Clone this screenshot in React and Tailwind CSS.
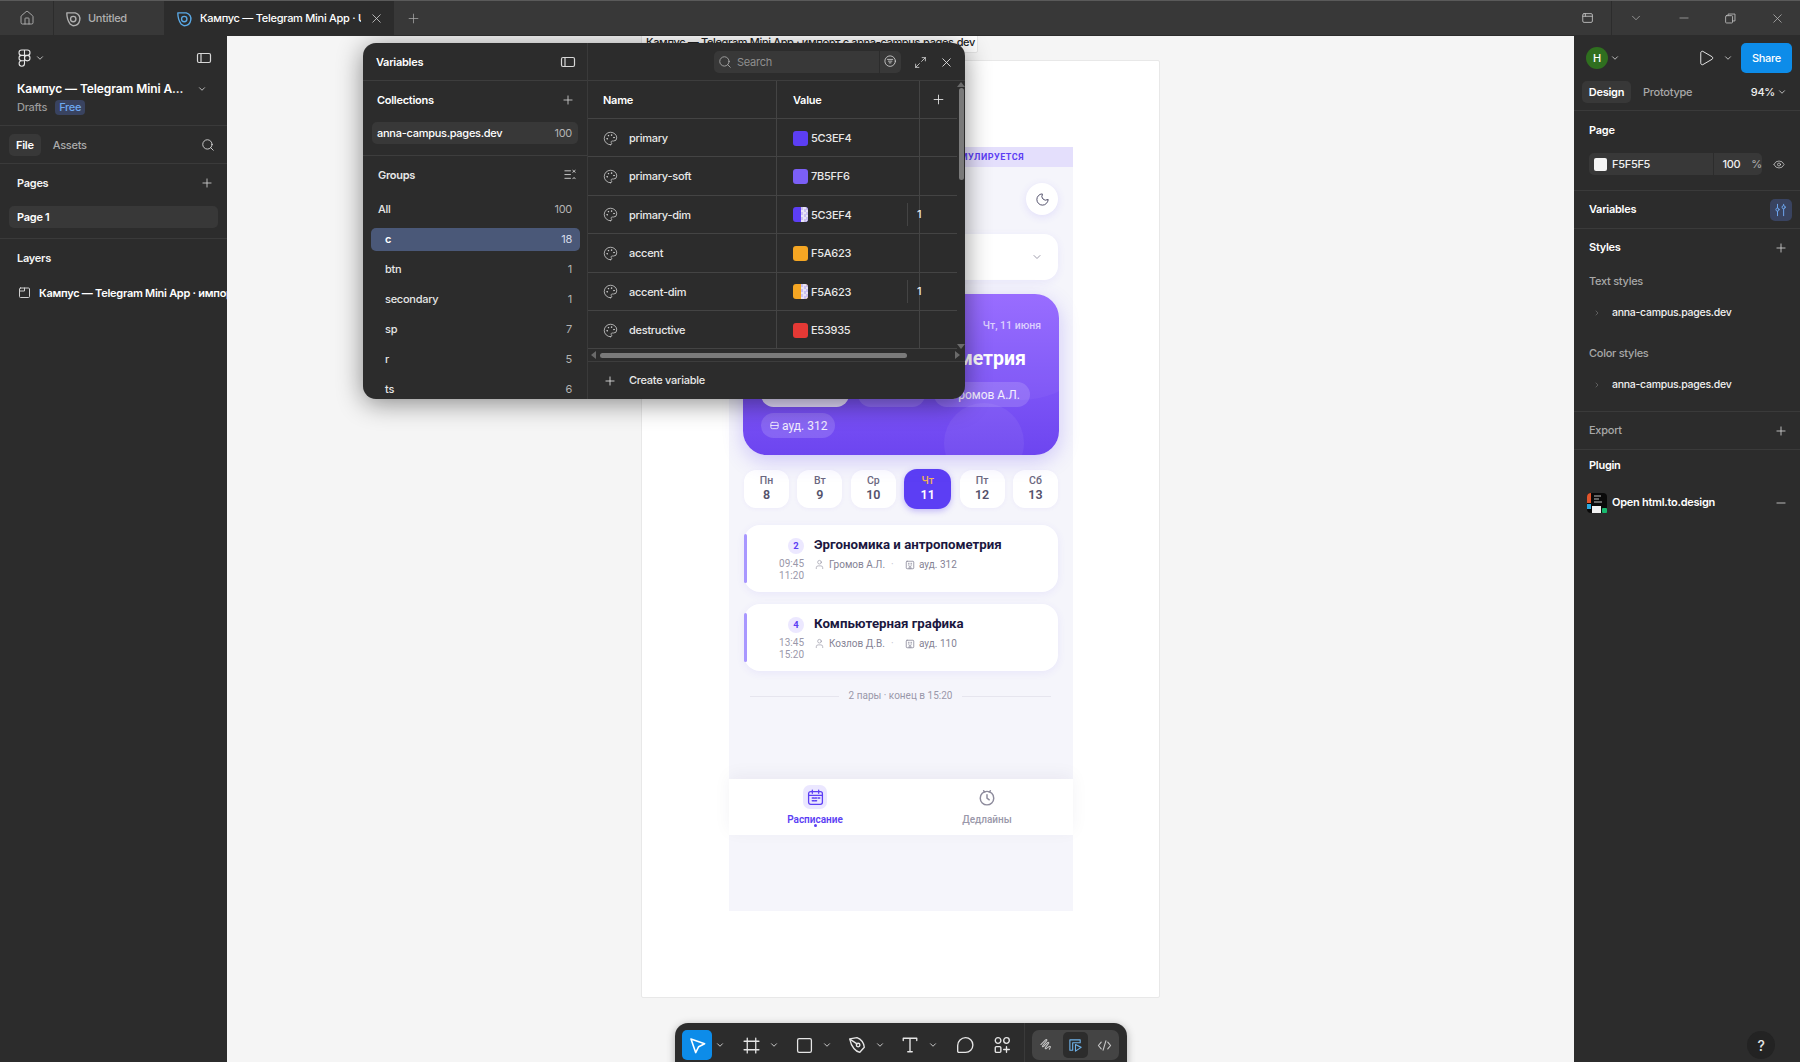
import React from "react";
import { House, X, Plus, Search, ChevronDown, ChevronRight, Eye, Palette, Moon, Minus, Maximize2, User, Play } from "lucide-react";

const S = ({ size = 16, children, className = "", sw = 1.2, vb = 16 }) => (
  <svg width={size} height={size} viewBox={`0 0 ${vb} ${vb}`} fill="none" stroke="currentColor" strokeWidth={sw} strokeLinecap="round" strokeLinejoin="round" className={className}>{children}</svg>
);
const Chev = ({ className = "" }) => <ChevronDown size={10} strokeWidth={2} className={className} />;
const PanelIcon = ({ className = "" }) => <S size={16} className={className}><rect x="1.5" y="3.5" width="13" height="9" rx="1.5" /><path d="M5 3.5v9" /></S>;
const FileIcon = ({ className = "" }) => (
  <S size={18} className={className}><path d="M2.5 2.5 L10 2.5 C13 3.5 14.5 6 14 9 C13.5 12 11 14 8 14 L5.5 12.5 C3.5 10 2.5 6 2.5 2.5Z" /><circle cx="8.2" cy="8" r="2.4" /></S>
);
const FigmaIcon = () => (
  <svg width="13" height="18" viewBox="0 0 13 18" fill="none" stroke="#e6e6e6" strokeWidth="1.1">
    <path d="M6.5 1H3.7a2.7 2.7 0 0 0 0 5.4h2.8zM6.5 1h2.8a2.7 2.7 0 0 1 0 5.4H6.5zM6.5 6.4H3.7a2.7 2.7 0 0 0 0 5.4h2.8zM12 9.1a2.75 2.75 0 1 1-5.5 0 2.75 2.75 0 0 1 5.5 0zM6.5 11.8H3.7a2.7 2.7 0 1 0 2.8 2.7z" />
  </svg>
);

const groups = [["All", "100", false], ["c", "18", true], ["btn", "1"], ["secondary", "1"], ["sp", "7"], ["r", "5"], ["ts", "6"]];
const vars = [
  ["primary", "#5C3EF4", "5C3EF4"],
  ["primary-soft", "#7B5FF6", "7B5FF6"],
  ["primary-dim", "#5C3EF4", "5C3EF4", true],
  ["accent", "#F5A623", "F5A623"],
  ["accent-dim", "#F5A623", "F5A623", true],
  ["destructive", "#E53935", "E53935"],
];

function Swatch({ color, dim }) {
  return (
    <span className="relative w-[15px] h-[15px] rounded-[3px] overflow-hidden flex shrink-0" style={{ background: color }}>
      {dim && (
        <span className="absolute right-0 top-0 bottom-0 w-[7px] bg-[repeating-conic-gradient(#e8e4f4_0_25%,#c9bff2_0_50%)] bg-[length:5px_5px]" />
      )}
    </span>
  );
}

function VariablesModal() {
  return (
    <div className="absolute left-[136px] top-[7px] w-[602px] h-[356px] rounded-[13px] bg-[#2c2c2c] shadow-[0_4px_26px_rgba(0,0,0,0.45)] flex overflow-hidden text-[11px] tracking-[-0.27px] font-medium text-[#f0f0f0]">
      <div className="w-[225px] shrink-0 border-r border-[#3a3a3a] flex flex-col">
        <div className="h-[38px] shrink-0 border-b border-[#3d3d3d] flex items-center justify-between pl-[13px] pr-[11px] pt-[1px] font-semibold text-white">
          <span>Variables</span>
          <PanelIcon className="text-[#d8d8d8]" />
        </div>
        <div className="h-[75px] shrink-0 border-b border-[#3d3d3d] px-[9px]">
          <div className="h-[37px] flex items-center justify-between pl-[5px] pr-[3px] pt-[1px] font-semibold text-white">
            <span>Collections</span>
            <Plus size={14} strokeWidth={1.4} className="text-[#d8d8d8]" />
          </div>
          <div className="h-[22px] mt-[4px] rounded-[5px] bg-[#383838] flex items-center justify-between pl-[5px] font-medium text-white">
            <span>anna-campus.pages.dev</span>
            <span className="font-normal text-[#b3b3b3] pr-[6px]">100</span>
          </div>
        </div>
        <div className="flex items-center justify-between h-[38px] shrink-0 pl-[15px] pr-[9px] font-semibold text-[#e8e8e8]">
          <span>Groups</span>
          <S size={15} className="text-[#cfcfcf]" sw={1}><path d="M2 3h6M2 7h6M2 11h6M10.5 2.5l2.5 2M13 2.5l-2.5 2M10.5 11.5l1.3-1.5 1.2 1.5" /></S>
        </div>
        <div className="flex flex-col pl-[8px] pr-[7px] pt-[4px]">
          {groups.map(([n, c, sel], i) => (
            <div key={n} className={`h-[23px] mb-[7px] shrink-0 rounded-[5px] flex items-center justify-between pr-[8px] ${i === 0 ? "pl-[7px]" : "pl-[14px]"} ${sel ? "bg-[#4a5878] font-semibold text-white" : "text-[#e6e6e6]"}`}>
              <span>{n}</span>
              <span className={`font-normal ${sel ? "text-[#d5dbe8]" : "text-[#b3b3b3]"}`}>{c}</span>
            </div>
          ))}
        </div>
      </div>
      <div className="flex-1 min-w-0 flex flex-col relative">
        <div className="h-[38px] shrink-0 border-b border-[#3d3d3d] flex items-center justify-end pr-[11px] pt-[1px]">
          <div className="w-[187px] h-[22px] rounded-[5px] bg-[#383838] flex items-center mr-[13px]">
            <Search size={14} className="ml-[4px] text-[#b3b3b3]" strokeWidth={1.4} />
            <span className="ml-[5px] flex-1 text-[#8f8f8f] font-normal">Search</span>
            <span className="w-[22px] h-[22px] border-l border-[#2c2c2c] flex items-center justify-center text-[#cfcfcf]">
              <S size={14} sw={1}><circle cx="7" cy="7" r="6" /><path d="M4 5h6M5 7h4M6 9h2" /></S>
            </span>
          </div>
          <Maximize2 size={13} strokeWidth={1.4} className="text-[#e6e6e6] mr-[12px]" />
          <X size={15} strokeWidth={1.4} className="text-[#e6e6e6]" />
        </div>
        <div className="flex-1 min-h-0 flex flex-col pr-[8px]">
          <div className="grid grid-cols-[189px_143px_37px] h-[38px] shrink-0 border-b border-[#444] font-semibold text-white">
            <div className="border-r border-[#444] flex items-center pl-[15px] pt-[1px]">Name</div>
            <div className="border-r border-[#444] flex items-center pl-[16px] pt-[1px]">Value</div>
            <div className="flex items-center justify-center"><Plus size={15} strokeWidth={1.4} className="text-[#e6e6e6]" /></div>
          </div>
          {vars.map(([n, col, hex, dim]) => (
            <div key={n} className="grid grid-cols-[189px_143px_37px] h-[38.4px] shrink-0 border-b border-[#444] text-[#e8e8e8]">
              <div className="border-r border-[#444] flex items-center pl-[15px] gap-[11px] pt-[1px]">
                <Palette size={15} strokeWidth={1.2} className="text-[#d8d8d8]" />
                <span>{n}</span>
              </div>
              <div className="border-r border-[#444] flex items-center pl-[16px] relative pt-[1px]">
                <Swatch color={col} dim={dim} />
                <span className="ml-[3px]">{hex}</span>
                {dim && <span className="absolute left-[130px] top-[7px] bottom-[7px] border-l border-[#444] pl-[9px] flex items-center">1</span>}
              </div>
              <div />
            </div>
          ))}
          <div className="h-[13px] shrink-0 border-b border-[#3d3d3d] flex items-center text-[#808080] mr-[-8px] pr-[8px]">
            <span className="w-0 h-0 ml-[3px] border-y-[4px] border-y-transparent border-r-[5px] border-r-[#6a6a6a]" />
            <span className="ml-[4px] w-[307px] h-[5px] rounded-full bg-[#7a7a7a]" />
            <span className="ml-auto w-0 h-0 mr-[-3px] border-y-[4px] border-y-transparent border-l-[5px] border-l-[#6a6a6a]" />
          </div>
          <div className="flex-1 flex items-center pl-[15px] gap-[12px] text-[#e8e8e8]">
            <Plus size={14} strokeWidth={1.4} />
            <span>Create variable</span>
          </div>
        </div>
        <div className="absolute right-[1px] top-[39px] w-[6px] flex flex-col items-center">
          <span className="w-0 h-0 border-x-[4px] border-x-transparent border-b-[5px] border-b-[#6a6a6a]" />
          <span className="mt-[1px] w-[5px] h-[92px] rounded-full bg-[#7a7a7a]" />
        </div>
        <span className="absolute right-[0px] top-[301px] w-0 h-0 border-x-[4px] border-x-transparent border-t-[5px] border-t-[#6a6a6a]" />
      </div>
    </div>
  );
}

const days = [["Пн", "8"], ["Вт", "9"], ["Ср", "10"], ["Чт", "11", true], ["Пт", "12"], ["Сб", "13"]];

function Building() {
  return <S size={10} vb={12} sw={1} className="text-[#8d8b9c]"><rect x="1.5" y="1.5" width="9" height="9" rx="1" /><path d="M4 4h1M7 4h1M4 6h1M7 6h1M5 10.5V8h2v2.5" /></S>;
}

function LessonCard({ num, from, to, title, teacher, room }) {
  return (
    <div className="h-[67px] bg-white rounded-[16px] shadow-[0_2px_8px_rgba(92,62,244,0.08)] flex relative">
      <span className="absolute left-0 top-[9px] bottom-[9px] w-[2.5px] rounded-full bg-[#a897ff]" />
      <div className="w-[60px] flex flex-col items-end pt-[13px] shrink-0">
        <span className="w-[16px] h-[16px] rounded-full bg-[#ece8ff] text-[#5c3ef4] text-[9.5px] font-bold flex items-center justify-center">{num}</span>
        <span className="mt-[4px] text-[10px] leading-[12px] text-[#9a98aa]">{from}</span>
        <span className="text-[10px] leading-[12px] text-[#9a98aa]">{to}</span>
      </div>
      <div className="pl-[10px] pt-[10px]">
        <div className="text-[13.25px] leading-[20px] font-bold text-[#1b1740]">{title}</div>
        <div className="mt-[2px] flex items-center text-[10px] text-[#858395]">
          <User size={11} strokeWidth={1.3} className="text-[#8d8b9c]" />
          <span className="ml-[4px] w-[62px]">{teacher}</span>
          <span className="w-[14px] text-[#c4c3ce]">·</span>
          <Building />
          <span className="ml-[4px]">{room}</span>
        </div>
      </div>
    </div>
  );
}

function Phone() {
  return (
    <div className="w-[344px] h-[764px] bg-[#f5f5fb] flex flex-col font-['Roboto',sans-serif]">
      <div className="h-[20px] bg-[#e4dffc] flex items-center justify-end pr-[49px] pt-[2px] text-[9px] font-bold tracking-[0.5px] text-[#5c3ef4]">СИМУЛИРУЕТСЯ</div>
      <div className="pl-[14px] pr-[15px] flex flex-col">
        <div className="pt-[16px] flex justify-end">
          <span className="w-[32px] h-[32px] rounded-full bg-white shadow-[0_2px_8px_rgba(92,62,244,0.12)] flex items-center justify-center text-[#3d3a58]"><Moon size={15} strokeWidth={1.4} /></span>
        </div>
        <div className="mt-[19px] h-[46px] bg-white rounded-[14px] shadow-[0_2px_8px_rgba(92,62,244,0.08)] flex items-center justify-end pr-[15px] text-[#858395]"><ChevronDown size={12} strokeWidth={1.6} /></div>
        <div className="mt-[14px] h-[161px] mr-[-1px] rounded-[24px] bg-gradient-to-b from-[#9567ff] to-[#6d45f0] shadow-[0_6px_20px_rgba(92,62,244,0.25)] relative overflow-hidden px-[18px] text-white">
          <span className="absolute right-[-50px] top-[-70px] w-[290px] h-[176px] rounded-full bg-white/[0.04]" />
          <span className="absolute left-[201px] top-[109px] w-[80px] h-[80px] rounded-full bg-white/[0.06]" />
          <div className="relative text-right text-[10.5px] font-medium text-white/70 pt-[26px] leading-[12px]">Чт, 11 июня</div>
          <div className="relative mt-[15px] flex justify-end pr-[15px] text-[19.5px] leading-[24px] font-bold whitespace-nowrap">Эргономика и антропометрия</div>
          <div className="relative mt-[11px] flex flex-wrap gap-x-[9px] gap-y-[6px] text-[12px] text-white/90">
            <span className="w-[88px] h-[25px] rounded-full bg-white/80" />
            <span className="w-[67px] h-[25px] rounded-full bg-white/15" />
            <span className="w-[96px] h-[25px] rounded-full bg-white/15 flex items-center justify-end pr-[10px]">Громов А.Л.</span>
            <span className="h-[25px] w-[74px] rounded-full bg-white/15 flex items-center pl-[9px] gap-[3px]">
              <S size={9} vb={10} sw={1}><rect x="1" y="1.5" width="8" height="7" rx="1.5" /><path d="M1 5h8" /></S>
              ауд. 312
            </span>
          </div>
        </div>
        <div className="mt-[15px] h-[38px] pl-[1px] flex justify-between items-center">
          {days.map(([d, n, a]) => (
            <div key={d} className={a ? "w-[47px] h-[40px] rounded-[13px] bg-[#5c3ef4] flex flex-col items-center justify-center shadow-[0_2px_6px_rgba(92,62,244,0.35)]" : "w-[45px] h-[38px] rounded-[12px] bg-white flex flex-col items-center justify-center shadow-[0_1px_4px_rgba(92,62,244,0.05)]"}>
              <span className={`text-[10.5px] leading-[13px] mt-[-2px] font-medium ${a ? "text-[#f5b455]" : "text-[#6b6880]"}`}>{d}</span>
              <span className={`text-[12.5px] leading-[15px] font-semibold ${a ? "text-white" : "text-[#55526b]"}`}>{n}</span>
            </div>
          ))}
        </div>
        <div className="mt-[17px] flex flex-col gap-[12px] pl-[1px]">
          <LessonCard num="2" from="09:45" to="11:20" title="Эргономика и антропометрия" teacher="Громов А.Л." room="ауд. 312" />
          <LessonCard num="4" from="13:45" to="15:20" title="Компьютерная графика" teacher="Козлов Д.В." room="ауд. 110" />
        </div>
        <div className="mt-[18px] flex items-center gap-[10px] px-[7px] text-[10px] leading-[14px] text-[#9a98aa]">
          <span className="flex-1 h-px bg-[#e6e5ee]" />
          <span>2 пары · конец в 15:20</span>
          <span className="flex-1 h-px bg-[#e6e5ee]" />
        </div>
      </div>
      <div className="mt-[76px] h-[56px] bg-white shadow-[0_-4px_16px_rgba(30,20,80,0.05)] flex">
        <div className="flex-1 flex flex-col items-center relative pt-[6px]">
          <span className="w-[24px] h-[24px] rounded-[7px] bg-[#ebe7ff] flex items-center justify-center text-[#5c3ef4]">
            <S size={17} sw={1.2}><rect x="1.5" y="2.5" width="13" height="12" rx="2" /><path d="M1.5 6h13M5 1v3M11 1v3" /><path d="M5 8.5h1.5M7.5 8.5H9M10.5 8.5H12M5 11h1.5M7.5 11H9" strokeWidth="1.4" /></S>
          </span>
          <span className="mt-[4px] text-[10px] leading-[14px] font-semibold text-[#5c3ef4]">Расписание</span>
          <span className="absolute top-[45px] w-[3px] h-[3px] rounded-full bg-[#5c3ef4]" />
        </div>
        <div className="flex-1 flex flex-col items-center pt-[6px]">
          <span className="w-[24px] h-[24px] flex items-center justify-center text-[#8d8b9c]">
            <S size={18} sw={1.3}><circle cx="8" cy="9" r="6" /><path d="M8 6v3l2 1.5M5 2.5 6 3.5M11 2.5 10 3.5" /></S>
          </span>
          <span className="mt-[4px] text-[10px] leading-[14px] font-medium text-[#9a98aa]">Дедлайны</span>
        </div>
      </div>
    </div>
  );
}

const ToolChevron = () => <span className="w-[16px] flex justify-center text-[#e6e6e6]"><Chev /></span>;
const ToolBtn = ({ children, className = "text-[#e6e6e6]" }) => <span className={`w-[30px] h-[30px] flex items-center justify-center rounded-[5px] ${className}`}>{children}</span>;

function Toolbar() {
  return (
    <div className="absolute left-[448px] top-[987px] w-[452px] h-[48px] rounded-t-[13px] bg-[#2c2c2c] shadow-[0_2px_8px_rgba(0,0,0,0.3)] flex items-start pt-[7px] pl-[7px]">
      <div className="flex items-center w-[54px]">
        <ToolBtn className="bg-[#0d8ce9] text-white"><S size={19} sw={1.3}><path d="M2.5 2.5 14 6.5 9 9 6.5 14Z" /></S></ToolBtn>
        <ToolChevron />
      </div>
      <div className="flex items-center w-[53px]">
        <ToolBtn><S size={17} sw={1.2}><path d="M4 1v14M12 1v14M1 4h14M1 12h14" /></S></ToolBtn>
        <ToolChevron />
      </div>
      <div className="flex items-center w-[53px]">
        <ToolBtn><S size={17} sw={1.2}><rect x="1.5" y="1.5" width="13" height="13" rx="1.5" /></S></ToolBtn>
        <ToolChevron />
      </div>
      <div className="flex items-center w-[53px]">
        <ToolBtn><S size={18} sw={1.2}><path d="M1.5 2.5 8 1.5 C12 3 14 6 14.5 10 L10.5 14.5 C7 14 3 10 1.5 2.5Z" /><circle cx="9" cy="8" r="1.6" /><path d="M2 3l6 4" /></S></ToolBtn>
        <ToolChevron />
      </div>
      <div className="flex items-center w-[55px]">
        <ToolBtn><S size={18} sw={1.2}><path d="M2 4V2h12v2M8 2v12M6 14h4" /></S></ToolBtn>
        <ToolChevron />
      </div>
      <ToolBtn><S size={18} sw={1.2}><path d="M8.5 1.5a6.5 6.5 0 0 1 0 13H2.5a1 1 0 0 1-1-1V8.5a7 7 0 0 1 7-7Z" /></S></ToolBtn>
      <span className="ml-[7px]"><ToolBtn><S size={18} sw={1.2}><circle cx="4.5" cy="4" r="2.5" /><circle cx="12" cy="4" r="2.5" /><rect x="2" y="9.5" width="5" height="5" rx="1" /><path d="M12 9.5v5M9.5 12h5" /></S></ToolBtn></span>
      <span className="ml-[7px] h-[48px] mt-[-7px] border-l border-[#3a3a3a]" />
      <div className="ml-[7px] w-[87px] h-[30px] rounded-[7px] bg-[#444] flex items-center px-[2px]">
        <span className="w-[26px] h-[26px] flex items-center justify-center text-[#c8c8c8]"><S size={15} sw={1.1}><path d="M2 7 7 2c1-1 2 0 1 1L4 8c-1 1 0 2 1 1l4-4c1-1 2 0 1 1l-3 4c-1 1 0 2 1 1l3-2c1-.5 1.5.5 1 1l-1 2" /></S></span>
        <span className="ml-[3px] w-[26px] h-[26px] rounded-[5px] bg-[#2c2c2c] flex items-center justify-center text-[#6db1e8]"><S size={15} sw={1.2}><path d="M2 2h11v3H5v8H2Z" /><path d="M8 7l6 3-6 4Z" /></S></span>
        <span className="ml-[3px] w-[26px] h-[26px] flex items-center justify-center text-[#c8c8c8]"><S size={15} sw={1.2}><path d="M4.5 4.5 1.5 8l3 3.5M11.5 4.5l3 3.5-3 3.5M9.5 3l-3 10" /></S></span>
      </div>
    </div>
  );
}

function LeftPanel() {
  return (
    <aside className="w-[227px] shrink-0 bg-[#2c2c2c] flex flex-col text-[11px] tracking-[-0.27px] font-medium text-[#f0f0f0]">
      <div className="h-[90px] shrink-0 border-b border-[#3a3a3a] px-[17px] relative">
        <div className="flex items-center justify-between h-[44px]">
          <span className="flex items-center gap-[4px] ml-[1px]"><FigmaIcon /><Chev className="text-[#d8d8d8]" /></span>
          <PanelIcon className="mr-[-2px] text-[#d8d8d8]" />
        </div>
        <div className="flex items-center justify-between whitespace-nowrap">
          <span className="text-[12px] tracking-[-0.1px] leading-[18px] font-semibold text-white">Кампус — Telegram Mini A...</span>
          <Chev className="text-[#d8d8d8] mr-[3px]" />
        </div>
        <div className="flex items-center gap-[8px] pt-[1px]">
          <span className="text-[#9a9a9a]">Drafts</span>
          <span className="h-[15px] px-[4px] rounded-[4px] bg-[#394360] text-[#6ea8f0] flex items-center">Free</span>
        </div>
      </div>
      <div className="h-[38px] shrink-0 border-b border-[#3a3a3a] flex items-center pl-[9px] pr-[12px] pt-[1px]">
        <span className="h-[22px] px-[7px] rounded-[5px] bg-[#383838] font-semibold text-white flex items-center">File</span>
        <span className="ml-[4px] px-[8px] text-[#ababab]">Assets</span>
        <Search size={14} strokeWidth={1.4} className="ml-auto text-[#e6e6e6]" />
      </div>
      <div className="h-[75px] shrink-0 border-b border-[#3a3a3a] px-[9px]">
        <div className="h-[37px] flex items-center justify-between pl-[8px] pr-[4px] pt-[1px] font-semibold text-[#f5f5f5]"><span>Pages</span><Plus size={14} strokeWidth={1.4} className="text-[#d8d8d8]" /></div>
        <div className="mt-[5px] h-[22px] rounded-[5px] bg-[#383838] flex items-center pl-[8px] font-semibold text-white">Page 1</div>
      </div>
      <div className="px-[17px] pt-[11px] font-semibold text-[#f5f5f5]">Layers</div>
      <div className="mt-[18px] pl-[18px] flex items-center gap-[8px] overflow-hidden whitespace-nowrap">
        <S size={13} className="shrink-0 text-[#cfcfcf]" sw={1} vb={13}><rect x="1.5" y="2" width="10" height="9.5" rx="1" /><path d="M1.5 5h5V2" /></S>
        <span className="font-semibold text-white">Кампус — Telegram Mini App · импорт с anna-campus.pages.dev</span>
      </div>
    </aside>
  );
}

function RightPanel() {
  const Sec = ({ children, cls = "" }) => <div className={`border-b border-[#3a3a3a] shrink-0 ${cls}`}>{children}</div>;
  return (
    <aside className="w-[226px] shrink-0 bg-[#2c2c2c] flex flex-col text-[11px] tracking-[-0.27px] font-medium text-[#f0f0f0] relative">
      <Sec cls="h-[75px] px-[8px]">
        <div className="h-[44px] flex items-center">
          <span className="ml-[4px] w-[22px] h-[22px] rounded-full bg-[#2f6f1f] text-white text-[11px] flex items-center justify-center">H</span>
          <Chev className="ml-[2px] text-[#d8d8d8]" />
          <Play size={18} strokeWidth={1.3} className="ml-[77px] text-[#e6e6e6]" />
          <Chev className="ml-[8px] text-[#d8d8d8]" />
          <span className="ml-[8px] w-[51px] h-[30px] rounded-[5px] bg-[#0d8ce9] text-white flex items-center justify-center">Share</span>
        </div>
        <div className="flex items-center mt-[1px] h-[22px]">
          <span className="w-[49px] h-[22px] rounded-[5px] bg-[#383838] font-semibold text-white flex items-center justify-center">Design</span>
          <span className="ml-[12px] text-[#a8a8a8]">Prototype</span>
          <span className="ml-auto flex items-center gap-[2px] mr-[5px]">94% <Chev className="text-[#d8d8d8]" /></span>
        </div>
      </Sec>
      <Sec cls="h-[80px] px-[15px]">
        <div className="h-[38px] flex items-center font-semibold text-white">Page</div>
        <div className="flex items-center mt-[4px]">
          <div className="w-[173px] h-[22px] rounded-[5px] bg-[#383838] flex items-center text-[#f0f0f0]">
            <span className="ml-[5px] w-[13px] h-[13px] rounded-[2px] bg-[#f5f5f5]" />
            <span className="ml-[5px] w-[102px]">F5F5F5</span>
            <span className="h-[22px] border-l border-[#2c2c2c] pl-[8px] flex items-center">100</span>
            <span className="ml-[11px] text-[#a8a8a8]">%</span>
          </div>
          <Eye size={17} strokeWidth={1.3} className="ml-[11px] text-[#e6e6e6]" />
        </div>
      </Sec>
      <Sec cls="h-[38px] px-[15px] flex items-center justify-between pr-[8px]">
        <span className="font-semibold text-white">Variables</span>
        <span className="w-[22px] h-[22px] rounded-[5px] bg-[#394360] flex items-center justify-center text-[#6ea8f0]">
          <S size={14} sw={1.1}><path d="M4 1.5v4M4 9.5v5M11 1.5v1M11 7v7.5" /><circle cx="4" cy="7.5" r="1.8" /><circle cx="11" cy="4.8" r="1.8" /></S>
        </span>
      </Sec>
      <Sec cls="h-[183px] pl-[15px] pr-[12px]">
        <div className="h-[37px] flex items-center justify-between font-semibold text-white"><span>Styles</span><Plus size={14} strokeWidth={1.4} className="text-[#d8d8d8]" /></div>
        <div className="h-[15px] mt-[4px] flex items-center text-[#a8a8a8] pt-[8px]">Text styles</div>
        <div className="mt-[20px] flex items-center whitespace-nowrap text-[10.5px]"><ChevronRight size={8} strokeWidth={1.6} className="ml-[4px] text-[#8a8a8a]" /><span className="ml-[11px]">anna-campus.pages.dev</span></div>
        <div className="mt-[24px] text-[#a8a8a8]">Color styles</div>
        <div className="mt-[16px] flex items-center whitespace-nowrap text-[10.5px]"><ChevronRight size={8} strokeWidth={1.6} className="ml-[4px] text-[#8a8a8a]" /><span className="ml-[11px]">anna-campus.pages.dev</span></div>
      </Sec>
      <Sec cls="h-[38px] pl-[15px] pr-[12px] flex items-center justify-between text-[#a8a8a8]"><span>Export</span><Plus size={14} strokeWidth={1.4} className="text-[#d8d8d8]" /></Sec>
      <div className="pl-[15px] pr-[12px] pt-[7px] font-semibold text-white">Plugin</div>
      <div className="mt-[19px] pl-[13px] pr-[12px] flex items-center">
        <svg width="20" height="20" viewBox="0 0 20 20" className="shrink-0">
          <rect width="20" height="20" rx="4" fill="#0a0a0a" />
          <path d="M0 4a4 4 0 0 1 4-4v10H0z" fill="#e2552c" />
          <rect y="11" width="4" height="5" fill="#29a9e0" />
          <rect x="5" y="13" width="9" height="7" fill="#f1f1f1" />
          <rect x="15" y="15" width="5" height="5" rx="1" fill="#18b96e" />
          <path d="M7 3h7M7 6h5M7 9h8" stroke="#bdbdbd" strokeWidth="1" />
        </svg>
        <span className="ml-[5px] font-semibold text-white">Open html.to.design</span>
        <Minus size={14} strokeWidth={1.4} className="ml-auto text-[#d8d8d8]" />
      </div>
      <span className="absolute right-[25px] bottom-[3px] w-[28px] h-[28px] rounded-full bg-[#232323] text-[#e6e6e6] text-[14px] flex items-center justify-center">?</span>
    </aside>
  );
}

export default function App() {
  return (
    <div className="w-[1800px] h-[1062px] overflow-hidden flex flex-col bg-[#2c2c2c] font-['Inter',sans-serif]">
      <header className="h-[36px] shrink-0 bg-[#383838] border-t border-[#5a5a5a] border-b-[1px] border-b-[#2c2c2c] flex items-stretch text-[11px] tracking-[-0.27px] font-medium">
        <div className="w-[54px] border-r border-[#2c2c2c] flex items-center justify-center text-[#b8b8b8]"><House size={16} strokeWidth={1.3} /></div>
        <div className="w-[111px] border-r border-[#2c2c2c] flex items-center pl-[10px] gap-[6px] text-[#b0b0b0] pt-[1px]"><FileIcon /><span>Untitled</span></div>
        <div className="w-[229px] bg-[#2c2c2c] flex items-center pl-[10px] text-white whitespace-nowrap pt-[1px]">
          <FileIcon className="text-[#5aa9e6] shrink-0" />
          <span className="ml-[7px] w-[161px] overflow-hidden">Кампус — Telegram Mini App · UI</span>
          <X size={15} strokeWidth={1.3} className="ml-[8px] text-[#d0d0d0]" />
        </div>
        <div className="w-[38px] flex items-center justify-center text-[#a8a8a8]"><Plus size={15} strokeWidth={1.2} /></div>
        <div className="ml-auto w-[236px] flex items-center text-[#b8b8b8]">
          <span className="w-[48px] h-full border-r border-[#2c2c2c] flex items-center justify-center">
            <S size={14} sw={1.1}><rect x="2" y="3" width="11" height="10" rx="1.5" /><path d="M2 6h11M5 3v3" /></S>
          </span>
          <span className="w-[48px] flex justify-center"><ChevronDown size={14} strokeWidth={1.2} /></span>
          <span className="w-[47px] flex justify-center"><Minus size={14} strokeWidth={1.2} /></span>
          <span className="w-[47px] flex justify-center"><S size={13} sw={1.1}><rect x="2" y="4.5" width="8.5" height="9" rx="1" /><path d="M5 4.5V2.5h8.5v8.5h-3" /></S></span>
          <span className="flex-1 flex justify-center"><X size={15} strokeWidth={1.2} /></span>
        </div>
      </header>
      <div className="flex-1 min-h-0 flex">
        <LeftPanel />
        <main className="flex-1 min-w-0 relative bg-[#f5f5f5] overflow-hidden">
          <div className="absolute left-[414px] top-[-1px] w-[337px] h-[18px] bg-white rounded-b-[2px] border border-[#e6e6e6] pl-[4px] text-[11px] tracking-[-0.35px] leading-[13px] font-medium text-[#222] whitespace-nowrap overflow-hidden">Кампус — Telegram Mini App · импорт с anna-campus.pages.dev</div>
          <div className="absolute left-[414px] top-[24px] w-[519px] h-[938px] bg-white border border-[#e8e8e8] rounded-[2px] pl-[87px] pt-[86px]">
            <Phone />
          </div>
          <VariablesModal />
          <Toolbar />
        </main>
        <RightPanel />
      </div>
    </div>
  );
}
